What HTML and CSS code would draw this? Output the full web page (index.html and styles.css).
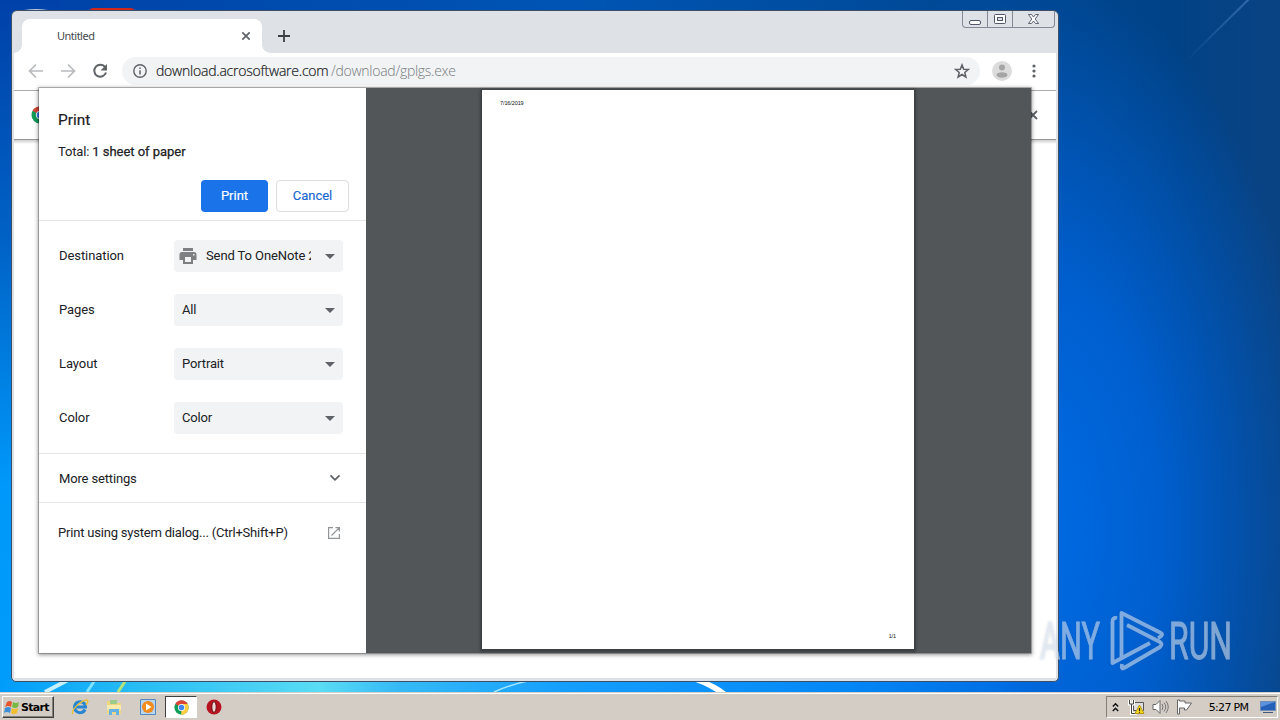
FILE: index.html
```html
<!DOCTYPE html>
<html lang="en">
<head>
  <meta charset="UTF-8" />
  <title>Print</title>
  <link rel="stylesheet" href="styles.css">
</head>
<body>

  <div class="desktop">
    <!-- Wallpaper light rays -->
    <svg class="wallpaper" viewBox="0 0 1280 692" width="1280" height="692">
      <defs>
        <linearGradient id="strip" x1="0" x2="1280" y1="0" y2="0" gradientUnits="userSpaceOnUse">
          <stop offset="0" stop-color="#009cfb"/>
          <stop offset=".1" stop-color="#25bbf4"/>
          <stop offset=".25" stop-color="#5adcf4"/>
          <stop offset=".31" stop-color="#36baf6"/>
          <stop offset=".44" stop-color="#159ffc"/>
          <stop offset=".66" stop-color="#0587f6"/>
          <stop offset=".78" stop-color="#006fe6"/>
          <stop offset=".83" stop-color="#0067da" stop-opacity="0"/>
        </linearGradient>
        <linearGradient id="ray" x1="1185" y1="60" x2="1250" y2="0" gradientUnits="userSpaceOnUse">
          <stop offset="0" stop-color="#5c93d4" stop-opacity="0"/>
          <stop offset="1" stop-color="#5c93d4" stop-opacity=".5"/>
        </linearGradient>
      </defs>
      <rect y="680" width="1280" height="12" fill="url(#strip)"/>
      <path d="M45 692L68 680" stroke="#c8f0ff" stroke-width="4"/>
      <path d="M87 692L95 680" stroke="#7fe0ff" stroke-width="3"/>
      <path d="M118 692L126 680" stroke="#b5e47a" stroke-width="3"/>
      <path d="M494 692Q512 684 532 680" stroke="#a6e6ff" stroke-width="1.5" fill="none"/>
      <path d="M689 680H704Q716 684 726 692H716Q704 684 689 680Z" fill="#fff"/>
      <path d="M1185 62L1250 -2" stroke="url(#ray)" stroke-width="2"/>
      <path d="M90 10Q90 8 94 8H130Q134 8 134 10Z" fill="#d3281c"/>
      <path d="M24 10Q36 8 48 10Z" fill="#b8c8de"/>
    </svg>

    <div class="window">
      <div class="tabstrip">
        <div class="tab">
          <span>Untitled</span>
          <svg width="10" height="10" viewBox="0 0 10 10"><path d="M1.3 1.3l7.4 7.4M8.7 1.3L1.3 8.7" stroke="#5f6368" stroke-width="1.7"/></svg>
        </div>
        <svg class="new-tab" width="12" height="12" viewBox="0 0 12 12"><path d="M6 0v12M0 6h12" stroke="#3c4043" stroke-width="1.8"/></svg>
        <div class="caption-buttons">
          <span class="caption"><svg width="13" height="13" viewBox="0 0 13 13"><rect x=".5" y="7.5" width="11" height="4" rx="1.5" fill="#fff" stroke="#505568"/></svg></span>
          <span class="caption"><svg width="13" height="13" viewBox="0 0 13 13"><rect x=".5" y="1.500" width="11" height="9" rx="1" fill="#fff" stroke="#505568"/><rect x="3.500" y="4.500" width="5" height="3" fill="#dee1e6" stroke="#505568"/></svg></span>
          <span class="caption close"><svg width="13" height="12" viewBox="0 0 13 12"><path d="M1.5 1.5h3L6.5 4l2-2.500h3L8.200 6l3.300 4.500h-3l-2-2.500-2 2.500h-3L4.800 6z" fill="#fff" stroke="#505568" stroke-width=".9"/></svg></span>
        </div>
      </div>

      <div class="toolbar">
        <svg class="nav" width="16" height="16" viewBox="0 0 16 16"><path d="M15 8H2M8 1.500L1.500 8 8 14.500" fill="none" stroke="#b9bbbe" stroke-width="1.700"/></svg>
        <svg class="nav" width="16" height="16" viewBox="0 0 16 16"><path d="M1 8h13M8 1.500L14.500 8 8 14.500" fill="none" stroke="#b9bbbe" stroke-width="1.700"/></svg>
        <svg class="nav" width="16" height="16" viewBox="0 0 16 16"><path d="M13.200 4.200A6 6 0 1 0 14 9.500" fill="none" stroke="#5f6368" stroke-width="2"/><path d="M15 1v6.500H8.500z" fill="#5f6368"/></svg>
        <div class="omnibox">
          <svg width="14" height="14" viewBox="0 0 14 14"><circle cx="7" cy="7" r="6.200" fill="none" stroke="#5f6368" stroke-width="1.400"/><path d="M7 6.200v4.200M7 3.400v1.500" stroke="#5f6368" stroke-width="1.500"/></svg>
          <span class="url"><span class="host">download.acrosoftware.com</span><span class="path">/download/gplgs.exe</span></span>
          <svg width="16" height="16" viewBox="0 0 16 16"><path d="M8 1.900l1.700 4.300 4.600.3-3.500 3 1.100 4.500L8 11.500 4.100 14l1.100-4.500-3.500-3 4.600-.3z" fill="none" stroke="#5f6368" stroke-width="1.500"/></svg>
        </div>
        <svg class="avatar" width="20" height="20" viewBox="0 0 20 20"><circle cx="10" cy="10" r="10" fill="#dcdcdc"/><circle cx="10" cy="6.500" r="3" fill="#a5a5a5"/><ellipse cx="10" cy="14" rx="5.500" ry="2.700" fill="#a5a5a5"/></svg>
        <svg class="menu" width="4" height="14" viewBox="0 0 4 14" fill="#5f6368"><circle cx="2" cy="2" r="1.600"/><circle cx="2" cy="7" r="1.600"/><circle cx="2" cy="12" r="1.600"/></svg>
      </div>

      <div class="infobar">
        <svg width="18" height="18" viewBox="0 0 20 20"><use href="#chrome"/></svg>
        <svg width="10" height="10" viewBox="0 0 10 10"><path d="M1 1l8 8M9 1L1 9" stroke="#5f6368" stroke-width="1.900"/></svg>
      </div>
      <div class="page"></div>
    </div>

    <div class="dialog">
      <div class="settings">
        <div class="header">
          <h1>Print</h1>
          <p>Total: <b>1 sheet of paper</b></p>
          <div class="buttons">
            <button class="primary">Print</button>
            <button>Cancel</button>
          </div>
        </div>
        <div class="options">
          <div class="row">
            <label>Destination</label>
            <div class="select printer">
              <svg width="18" height="16" viewBox="0 0 18 16"><path d="M4 0h10v3H4zM3 4h12q2.500 0 2.500 2.500V12H14v4H4v-4H.5V6.500Q.5 4 3 4zM6 9v5h6V9zM14 6v1.500h1.500V6z" fill="#7d7f82" fill-rule="evenodd"/></svg>
              <span>Send To OneNote 2010</span><i></i>
            </div>
          </div>
          <div class="row"><label>Pages</label><div class="select"><span>All</span><i></i></div></div>
          <div class="row"><label>Layout</label><div class="select"><span>Portrait</span><i></i></div></div>
          <div class="row"><label>Color</label><div class="select"><span>Color</span><i></i></div></div>
        </div>
        <div class="more">
          <span>More settings</span>
          <svg width="12" height="8" viewBox="0 0 12 8"><path d="M1.500 1.300L6 5.800l4.500-4.500" fill="none" stroke="#5f6368" stroke-width="1.800"/></svg>
        </div>
        <div class="system">
          <span>Print using system dialog... (Ctrl+Shift+P)</span>
          <svg width="12" height="12" viewBox="0 0 12 12" fill="none" stroke="#929598" stroke-width="1.200"><path d="M5 .6H.6v10.800h10.800V7M7.500.6h3.900v3.900M11.200.8L3.500 8.500"/></svg>
        </div>
      </div>
      <div class="preview">
        <div class="sheet">
          <span>7/16/2019</span>
          <span class="number">1/1</span>
        </div>
      </div>
    </div>

    <svg class="watermark" width="210" height="74" viewBox="1036 604 210 74">
      <g fill="#e4edf8" stroke="#e4edf8" font-family="Roboto, sans-serif" font-size="52" opacity=".54">
        <text x="1040" y="659" textLength="60" lengthAdjust="spacingAndGlyphs">ANY</text>
        <text x="1169" y="659" textLength="63" lengthAdjust="spacingAndGlyphs">RUN</text>
        <path d="M1117 618Q1112.500 617 1112.500 622V663L1150 643M1121.500 657V613L1161 633Q1164 635 1158 638M1127 625L1160 642Q1163 644 1160 647L1124 668Q1121 670 1122 664" fill="none" stroke-width="3.800" stroke-linejoin="round"/>
      </g>
    </svg>
  </div>

  <div class="taskbar">
    <div class="start">
      <svg width="17" height="17" viewBox="0 0 17 17"><path d="M3 3q3-2 5 0L7 8Q4 6 1 8z" fill="#e5562b"/><path d="M9 3q3 2 6 0l-1 5q-3 2-6 0z" fill="#78b943"/><path d="M1 9q3-2 6 0l-1 5q-3-2-6 0z" fill="#3f8fd8"/><path d="M8 9q3 2 6 0l-1 5q-3 2-6 0z" fill="#f3bd2c"/></svg>
      <span>Start</span>
    </div>
    <div class="quick">
      <svg width="18" height="18" viewBox="0 0 18 18"><path d="M14 11.500A5.500 5.500 0 1 1 14.500 9H5" fill="none" stroke="#2686d2" stroke-width="3"/><path d="M2 16C-1 13 10 2 16 2q2 1-1 5" fill="none" stroke="#e9bf36" stroke-width="1.400"/></svg>
      <svg width="18" height="18" viewBox="0 0 18 18"><path d="M2 3h6l1 2h7v11H2z" fill="#f0d681"/><path d="M5 2h7v4H5z" fill="#9ccb8b"/><path d="M2 7h14v5H2z" fill="#f9e9aa"/><path d="M4 17v-6h10v6h-3v-3H7v3z" fill="#63b2e1"/></svg>
      <svg width="18" height="18" viewBox="0 0 18 18"><path d="M1.500 1.500h15v15h-15z" fill="#b9d5ee" stroke="#5489bd"/><circle cx="9" cy="9" r="6" fill="#f28b1c"/><path d="M7 5.500v7L12.500 9z" fill="#fff"/></svg>
      <div class="active">
        <svg width="15" height="15" viewBox="0 0 20 20">
          <g id="chrome"><circle cx="10" cy="10" r="9.500" fill="#109b57"/><path d="M10 10L1.800 5.200A9.500 9.500 0 0 1 18.200 5.200H10z" fill="#db4437"/><path d="M10 10V5.200h8.200A9.500 9.500 0 0 1 9.500 19.500z" fill="#ffcd40"/><circle cx="10" cy="10" r="4.700" fill="#fff"/><circle cx="10" cy="10" r="3.700" fill="#4285f4"/></g>
        </svg>
      </div>
      <svg width="16" height="16" viewBox="0 0 16 16"><circle cx="8" cy="8" r="7.500" fill="#b61420"/><ellipse cx="8" cy="8" rx="2.200" ry="5.400" fill="#ecd8d6" stroke="#6a0910"/></svg>
    </div>
    <div class="tray">
      <svg width="7" height="11" viewBox="0 0 7 11"><path d="M.8 4.500l2.700-2.700 2.700 2.700M.8 9l2.700-2.700L6.200 9" fill="none" stroke="#111" stroke-width="1.500"/></svg>
      <svg class="network" width="17" height="16" viewBox="0 0 17 16"><path d="M5.500 3.500h10v8h-10z" fill="#dedede" stroke="#555"/><path d="M1.500 1v4h4V1M3.500 5v9.500h5" fill="none" stroke="#fff" stroke-width="3"/><path d="M1.500 1v4h4V1M3.500 5v9.500h5" fill="none" stroke="#444"/><path d="M11.500 6l4.500 8.500H7z" fill="#f9dc21" stroke="#b49412"/><path d="M11.500 9v3M11.500 12.700v1" stroke="#222" stroke-width="1.200"/></svg>
      <svg width="17" height="16" viewBox="0 0 17 16"><path d="M1 5.500h3l4-4v13l-4-4H1z" fill="#fff" stroke="#666"/><path d="M10 5q2 3 0 6M12 3.500q3.500 4.500 0 9M14 2q4.500 6 0 12" fill="none" stroke="#777"/></svg>
      <svg width="17" height="16" viewBox="0 0 17 16"><path d="M1.500 1v14h2V9h5v2h2l5-7H9V2H3.500V1z" fill="#fff" stroke="#666"/></svg>
      <span class="clock">5:27 PM</span>
      <svg width="16" height="14" viewBox="0 0 16 14"><path d="M.5 1.500h15v9H.5z" fill="#2460b8" stroke="#6d8eb8"/><path d="M1 2h14L1 7z" fill="#5c91dc"/><path d="M3 12.500h10" stroke="#425b7d"/></svg>
    </div>
  </div>

</body>
</html>
```
FILE: styles.css
```css
* {
  box-sizing: border-box;
}
body {
  margin: 0;
  width: 1280px;
  height: 720px;
  overflow: hidden;
  display: flex;
  flex-direction: column;
  font-family: Roboto, sans-serif;
  font-size: 13px;
  color: #202124;
}
svg {
  display: block;
  flex-shrink: 0;
}

.desktop {
  position: relative;
  height: 692px;
  background:
    linear-gradient(#0041a8, #0062c6 35%, #0098fa 70%, #009cfb) 0 0 / 60px 692px no-repeat,
    radial-gradient(ellipse 290px 560px at 1030px 530px, #006ce6, #005fcf 45%, rgba(0, 75, 170, 0) 100%),
    linear-gradient(90deg, #0041a8, #0055b4 45%, #004690 80%, #014286 92%, #0a4383);
}
.wallpaper {
  position: absolute;
  left: 0;
  top: 0;
}

/* browser window */
.window {
  position: absolute;
  left: 11px;
  top: 10px;
  width: 1048px;
  height: 672px;
  padding: 0 2px 3px;
  display: flex;
  flex-direction: column;
  background: #dee1e6;
  border: 1px solid #3b5068;
  border-radius: 6px 6px 5px 5px;
  overflow: hidden;
}
.tabstrip {
  height: 42px;
  display: flex;
  align-items: flex-end;
  padding-left: 8px;
  flex-shrink: 0;
}
.tab {
  position: relative;
  width: 240px;
  height: 34px;
  padding: 0 11px 0 35px;
  display: flex;
  align-items: center;
  justify-content: space-between;
  background: #fff;
  border-radius: 8px 8px 0 0;
  font-family: "Noto Sans", sans-serif;
  font-size: 11px;
  letter-spacing: -0.5px;
  color: #45494d;
}
.tab span {
  padding-bottom: 2px;
}
.tab::before,
.tab::after {
  content: "";
  position: absolute;
  bottom: 0;
  width: 8px;
  height: 8px;
}
.tab::before {
  left: -8px;
  background: radial-gradient(circle at 0 0, transparent 7.5px, #fff 8px);
}
.tab::after {
  right: -8px;
  background: radial-gradient(circle at 100% 0, transparent 7.5px, #fff 8px);
}
.new-tab {
  margin: 0 0 11px 16px;
}
.caption-buttons {
  display: flex;
  align-self: flex-start;
  margin-left: auto;
  margin-right: 1px;
  height: 17px;
  border: 1px solid #858996;
  border-top: none;
  border-radius: 0 0 4px 4px;
}
.caption {
  width: 25px;
  display: flex;
  align-items: center;
  justify-content: center;
  border-right: 1px solid #858996;
}
.caption.close {
  width: 41px;
  border-right: none;
}

.toolbar {
  height: 38px;
  display: flex;
  align-items: center;
  background: #fff;
  border-bottom: 1px solid #a9abad;
  padding: 0 20px 1px 14px;
  flex-shrink: 0;
}
.nav {
  margin-right: 16px;
}
.omnibox {
  flex: 1;
  height: 28px;
  margin: 0 12px 0 -2px;
  padding: 0 10px 0 11px;
  display: flex;
  align-items: center;
  background: #f1f3f4;
  border-radius: 14px;
}
.url {
  flex: 1;
  margin-left: 9px;
  padding-bottom: 2px;
  font-family: "Open Sans", sans-serif;
  font-size: 14px;
  font-weight: 300;
  white-space: nowrap;
}
.host {
  display: inline-block;
  width: 175px;
  letter-spacing: -0.22px;
  -webkit-text-stroke: 0.2px;
}
.path {
  letter-spacing: -0.27px;
  color: #777b7f;
}
.menu {
  margin-left: 20px;
}

.infobar {
  height: 49px;
  display: flex;
  align-items: center;
  justify-content: space-between;
  padding: 0 18px 0 17px;
  background: #fff;
  border-bottom: 1px solid #999;
  flex-shrink: 0;
}
.page {
  flex: 1;
  background: linear-gradient(#ccc, #fff 4px);
}

/* print dialog */
.dialog {
  position: absolute;
  left: 39px;
  top: 88px;
  width: 992px;
  height: 565px;
  display: flex;
  background: #fff;
  box-shadow: 0 0 0 1px rgba(0, 0, 0, 0.22), 0 1px 4px 1px rgba(0, 0, 0, 0.4);
}
.settings {
  width: 327px;
}
.header {
  height: 133px;
  padding: 22px 17px 0 19px;
  border-bottom: 1px solid #e4e6e9;
}
h1 {
  margin: 0;
  font-size: 15.4px;
  line-height: 20px;
  font-weight: 400;
  -webkit-text-stroke: 0.2px;
}
p {
  margin: 13px 0 0;
  line-height: 18px;
  letter-spacing: -0.15px;
}
p b {
  font-weight: 400;
  letter-spacing: -0.04px;
  -webkit-text-stroke: 0.25px;
}
.buttons {
  display: flex;
  justify-content: flex-end;
  gap: 8px;
  margin-top: 19px;
}
button {
  width: 73px;
  height: 32px;
  padding: 0 0 2px;
  border: 1px solid #dadce0;
  border-radius: 4px;
  background: #fff;
  font: 400 13px Roboto, sans-serif;
  -webkit-text-stroke: 0.15px;
  color: #1967d2;
}
button.primary {
  width: 67px;
  border: none;
  background: #1a73e8;
  color: #fff;
}
.options {
  height: 233px;
  padding: 19px 23px 0 20px;
  display: flex;
  flex-direction: column;
  gap: 22px;
  border-bottom: 1px solid #e4e6e9;
}
.row {
  display: flex;
  align-items: center;
  justify-content: space-between;
  letter-spacing: -0.08px;
}
.row label,
.select span {
  padding-bottom: 2px;
}
.select {
  width: 169px;
  height: 32px;
  padding: 0 8px;
  display: flex;
  align-items: center;
  justify-content: space-between;
  background: #f1f3f4;
  border-radius: 4px;
  letter-spacing: -0.15px;
}
.select i {
  border: 5px solid transparent;
  border-top-color: #5f6368;
  border-bottom: none;
}
.printer {
  padding-left: 5px;
}
.printer span {
  width: 105px;
  margin: 0 7px 0 2px;
  overflow: hidden;
  white-space: nowrap;
  letter-spacing: -0.1px;
}
.more {
  height: 49px;
  padding: 0 25px 0 20px;
  display: flex;
  align-items: center;
  justify-content: space-between;
  letter-spacing: -0.15px;
  border-bottom: 1px solid #e4e6e9;
}
.system {
  height: 60px;
  padding: 0 26px 0 19px;
  display: flex;
  align-items: center;
  justify-content: space-between;
  letter-spacing: -0.2px;
}
.system span {
  padding-bottom: 2px;
}
.preview {
  flex: 1;
  padding: 2px 0 0 116px;
  background: #525659;
}
.sheet {
  width: 432px;
  height: 559px;
  padding: 9px 18px 9px;
  display: flex;
  flex-direction: column;
  justify-content: space-between;
  background: #fff;
  box-shadow: 0 1px 2px 2px #3d3f41;
  font: 5.5px/8px "Liberation Sans", sans-serif;
  letter-spacing: -0.1px;
  color: #111;
}
.number {
  align-self: flex-end;
}

.watermark {
  position: absolute;
  left: 1036px;
  top: 604px;
  filter: drop-shadow(0 0 1.5px rgba(70, 90, 120, 0.35));
}

/* taskbar */
.taskbar {
  height: 28px;
  padding: 1px 2px 0;
  display: flex;
  align-items: center;
  background: #d4cdc6;
  border-top: 1px solid #d4cdc6;
  box-shadow: inset 0 1px #fff;
  z-index: 2;
}
.start {
  width: 52px;
  height: 22px;
  display: flex;
  align-items: center;
  padding-left: 1px;
  border: 1px solid;
  border-color: #fff #404040 #404040 #fff;
  box-shadow: inset -1px -1px #848078;
  font: bold 11px "DejaVu Sans", sans-serif;
  letter-spacing: -0.7px;
  color: #000;
}
.quick {
  display: flex;
  align-items: center;
  margin-left: 17px;
}
.quick > svg {
  margin-right: 16px;
}
.active {
  width: 32px;
  height: 22px;
  margin: 0 9px 0 -8px;
  display: flex;
  align-items: center;
  justify-content: center;
  background: #fff;
  border: 1px solid;
  border-color: #404040 #fff #fff #404040;
}
.tray {
  width: 172px;
  height: 22px;
  margin-left: auto;
  padding: 0 1px 0 5px;
  display: flex;
  align-items: center;
  gap: 7px;
  border: 1px solid;
  border-color: #848078 #fff #fff #848078;
}
.network {
  margin-left: 2px;
}
.clock {
  flex: 1;
  padding-left: 4px;
  text-align: center;
  font-family: "DejaVu Sans", sans-serif;
  font-size: 11px;
  letter-spacing: -0.7px;
  white-space: nowrap;
  color: #000;
}
```
